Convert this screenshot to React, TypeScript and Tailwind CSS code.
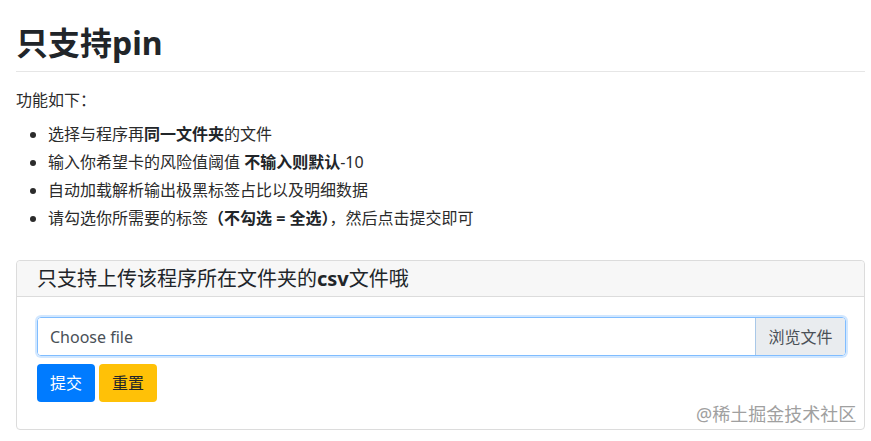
export default function App() {
  const font = { fontFamily: '"Noto Sans", "Noto Sans CJK SC", sans-serif' };
  return (
    <div
      className="relative w-[871px] h-[441px] overflow-hidden bg-white pl-4 pr-[6px] pt-[23px] text-[#212529]"
      style={font}
    >
      <h1 className="text-[32px] leading-[40px] font-bold">只支持pin</h1>
      <div className="mt-[8px] border-t border-[#e6e6e6]" />
      <p className="mt-[14px] text-[16px] leading-[28px] text-[#2b2b2b]">功能如下：</p>
      <ul className="mt-[6px] list-disc pl-[32px] text-[16px] leading-[28px] text-[#2b2b2b]">
        <li>
          选择与程序再<b className="text-[#212529]">同一文件夹</b>的文件
        </li>
        <li>
          输入你希望卡的风险值阈值 <b className="text-[#212529]">不输入则默认</b>-10
        </li>
        <li>自动加载解析输出极黑标签占比以及明细数据</li>
        <li>
          请勾选你所需要的标签<b className="text-[#212529]">（不勾选 = 全选）</b>，然后点击提交即可
        </li>
      </ul>
      <div className="mt-[28px] rounded-[4px] border border-[#dcdcdc]">
        <div className="h-[36px] border-b border-[#dcdcdc] bg-[#f7f7f7] pl-[20px] text-[20px] leading-[35px] rounded-t-[4px]">
          只支持上传该程序所在文件夹的<b>csv</b>文件哦
        </div>
        <div className="pl-[20px] pr-[18px] pt-[20px] pb-[27px]">
          <div className="flex h-[39px] rounded-[4px] border border-[#80bdff] shadow-[0_0_0_2px_rgba(0,123,255,0.18)] overflow-hidden">
            <div className="flex-1 flex items-center bg-white pl-[12px] text-[16px] text-[#495057]">
              Choose file
            </div>
            <div className="flex w-[90px] items-center justify-center border-l border-[#a9c8e8] bg-[#e9ecef] text-[16px] text-[#495057]">
              浏览文件
            </div>
          </div>
          <div className="mt-[8px] flex gap-[4px]">
            <button className="h-[38px] w-[58px] rounded-[4px] bg-[#007bff] text-[16px] text-white">
              提交
            </button>
            <button className="h-[38px] w-[58px] rounded-[4px] bg-[#ffc107] text-[16px] text-[#212529]">
              重置
            </button>
          </div>
        </div>
      </div>
      <div className="absolute left-[696px] top-[402px] text-[18px] leading-[24px] text-[#a0a0a0]">
        @稀土掘金技术社区
      </div>
    </div>
  );
}
